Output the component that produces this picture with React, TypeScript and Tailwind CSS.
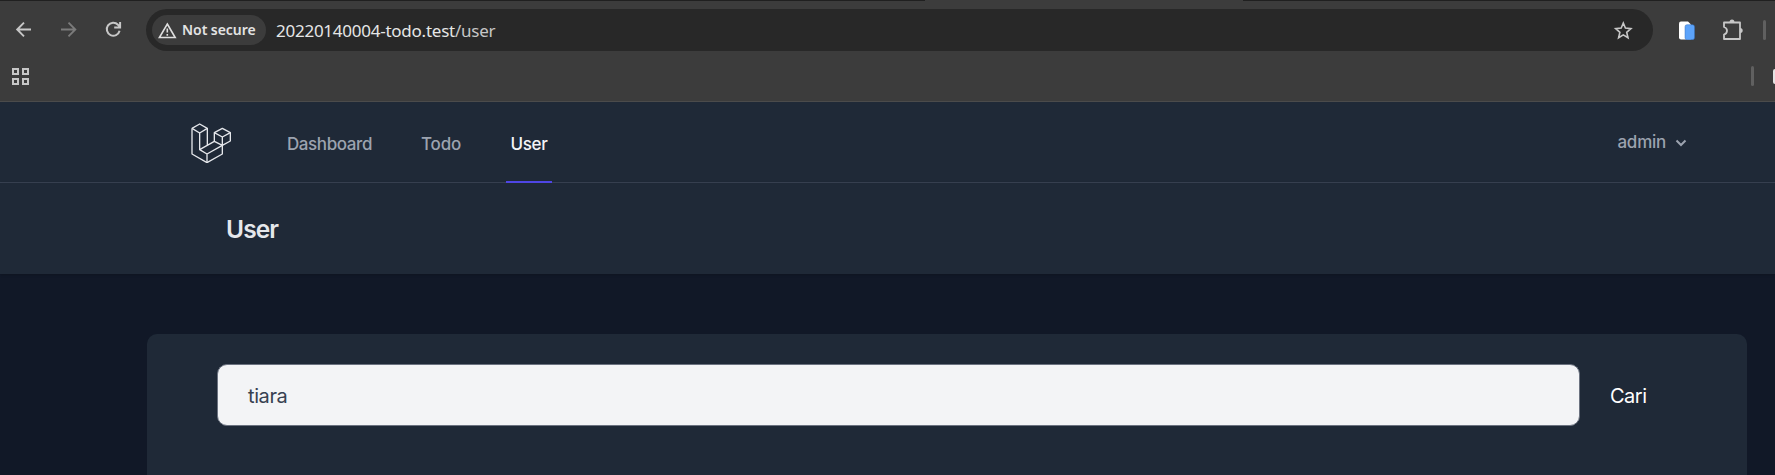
import type { ReactNode } from 'react';

function BrowserBar() {
  return (
    <div className="h-[102px] border-b border-[#4b4b4b] bg-[#3c3c3c] font-['Noto_Sans',sans-serif]">
      <div className="flex h-px justify-between">
        <div className="h-px w-[925px] bg-[#202020]" />
        <div className="h-px w-[532px] bg-[#202020]" />
      </div>
      <div className="flex h-[58px] items-center">
        <svg className="ml-3.5 size-5 shrink-0" viewBox="0 0 20 20" fill="none" stroke="#c7c7c7" strokeWidth="1.9">
          <path d="M17 9.5H3.5M10 2.7 3.2 9.5 10 16.3" />
        </svg>
        <svg className="ml-[25px] size-5 shrink-0" viewBox="0 0 20 20" fill="none" stroke="#7b7b7b" strokeWidth="1.9">
          <path d="M2 9.5H16M9.5 2.7 16.3 9.5 9.5 16.3" />
        </svg>
        <svg className="ml-6 size-5 shrink-0" viewBox="0 0 20 20" fill="none" stroke="#c7c7c7" strokeWidth="2">
          <path d="M16.6 10.8A6.5 6.5 0 1 1 15 4.7L17 6.7M17.1 2V7.5H11.2" />
        </svg>
        <div className="ml-[23px] flex h-[42px] w-[1507px] shrink-0 items-center rounded-full bg-[#282828] pl-1.5">
          <div className="flex h-[30px] w-[114px] items-center rounded-full bg-[#3c3c3c] pl-1.5">
            <svg className="h-[17px] w-[19px] shrink-0" viewBox="0 0 19 17" fill="none" stroke="#dedede" strokeWidth="1.6">
              <path d="M9.3 2 17.2 15.5H1.4ZM9.3 6.5V10.6M9.3 12V13.7" />
            </svg>
            <span className="ml-[5px] whitespace-nowrap text-[14px] leading-none font-semibold tracking-[-0.05px] text-[#e3e3e3]">
              Not secure
            </span>
          </div>
          <span className="ml-2.5 whitespace-nowrap pt-px text-[17px] leading-none tracking-[-0.25px] text-[#e6e6e6]">
            20220140004-todo.test<span className="text-[#c7c7c7]">/user</span>
          </span>
          <svg className="mr-5 ml-auto size-5" viewBox="0 0 20 20" fill="none" stroke="#c7c7c7" strokeWidth="1.6">
            <path d="m10.3 3 2.1 5.1 5.5.5-4.2 3.7 1.3 5.5-4.7-2.9-4.7 2.9 1.3-5.5-4.2-3.7 5.5-.5Z" />
          </svg>
        </div>
        <svg className="ml-[25px] h-[20px] w-[18px] shrink-0" viewBox="0 0 18 20">
          <path d="M3 1.5H10L13 4.5V19.5H3Q1 19.5 1 17.5V3.5Q1 1.5 3 1.5Z" fill="#ffffff" />
          <rect x="7" y="4.7" width="9.5" height="15" rx="2" fill="#5ca3fa" stroke="#3571bf" strokeWidth=".5" />
        </svg>
        <svg className="ml-[25px] h-[22px] w-[22px] shrink-0" viewBox="0 0 22 22" fill="none" stroke="#c7c7c7" strokeWidth="1.8" strokeLinejoin="round">
          <path d="M3 3.5H19V20H3V15.5Q6 14.5 6 11.7T3 8Z" />
          <path d="M8.5 3.5Q8.5 .6 11 .6T13.5 3.5ZM19 9Q21.7 9 21.7 11.5T19 14Z" fill="#c7c7c7" stroke="none" />
        </svg>
        <div className="ml-5 h-5 w-[3px] rounded-full bg-[#606060]" />
      </div>
      <div className="flex h-[34px] items-center overflow-hidden">
        <svg className="ml-[11px] size-[19px] shrink-0" viewBox="0 0 19 19" fill="none" stroke="#c7c7c7" strokeWidth="2">
          <path d="M2 2H7V7H2ZM12 2H17V7H12ZM2 12H7V17H2ZM12 12H17V17H12Z" />
        </svg>
        <div className="mr-[19px] ml-auto h-5 w-[3px] rounded-full bg-[#606060]" />
        <div className="h-[15px] w-[2px] rounded-l-sm bg-[#e3e3e3]" />
      </div>
    </div>
  );
}

function NavLink({ active = false, className, children }: { active?: boolean; className: string; children: ReactNode }) {
  return (
    <a
      className={`flex h-[81px] items-center justify-center border-b-2 pt-[6px] text-[17px] leading-none font-medium ${
        active ? 'border-[#4f46e5] text-[#f3f4f6]' : 'border-transparent text-[#9ca3af]'
      } ${className}`}
    >
      {children}
    </a>
  );
}

function Logo() {
  return (
    <svg className="h-10 w-10 shrink-0" viewBox="64 66 120 120" fill="none" stroke="#e5e7eb" strokeWidth="4" strokeLinejoin="round">
      <path d="M67 82 90 69 113 82V133M67 82V159L112 185 158 159V133L182 120V95L158 82 134 95V121" />
      <path d="M67 82 90 96 113 82M90 96V146L112 159 158 133 134 121 90 146M112 159V185M134 95 158 108 182 95M158 108V133" />
    </svg>
  );
}

export default function App() {
  return (
    <div className="h-[475px] w-[1775px] overflow-hidden bg-[#111827] font-[Inter,sans-serif]">
      <BrowserBar />
      <nav className="flex h-[81px] items-start border-b border-[#374151] bg-[#1f2937] pl-[191px]">
        <div className="pt-[21px]">
          <Logo />
        </div>
        <div className="flex h-[81px]">
          <NavLink className="ml-[51px] w-[95px] tracking-[-0.4px]">Dashboard</NavLink>
          <NavLink className="ml-[39px] w-[50px] tracking-[-0.15px]">Todo</NavLink>
          <NavLink className="ml-[40px] w-[46px] tracking-[-0.35px]" active>
            User
          </NavLink>
        </div>
        <div className="mr-[88px] ml-auto flex h-20 items-center pt-px text-[17px] leading-none font-medium text-[#9ca3af]">
          <span className="tracking-[-0.25px]">admin</span>
          <svg className="ml-[9px] h-3 w-3" viewBox="0 0 12 12" fill="none" stroke="#9ca3af" strokeWidth="2">
            <path d="m1.5 3.5 4.5 4.5 4.5-4.5" />
          </svg>
        </div>
      </nav>
      <header className="flex h-[91px] items-center bg-[#1f2937] pt-px pl-[226px] shadow">
        <h2 className="text-[24.5px] leading-none font-semibold tracking-[-0.9px] text-[#e5e7eb]">User</h2>
      </header>
      <main className="pt-[60px] pl-[147px]">
        <section className="flex h-[200px] w-[1600px] items-start rounded-[10px] bg-[#1f2937] pt-[30px] pl-[70px]">
          <div className="flex h-[62px] w-[1363px] items-center rounded-[10px] border border-[#6b7280] bg-[#f3f4f6] pt-px pl-[30px] text-[20px] leading-none tracking-[-0.4px] text-[#374151]">
            tiara
          </div>
          <button className="ml-[30px] h-[62px] pt-px text-[20px] leading-none tracking-[-0.5px] text-white">Cari</button>
        </section>
      </main>
    </div>
  );
}
